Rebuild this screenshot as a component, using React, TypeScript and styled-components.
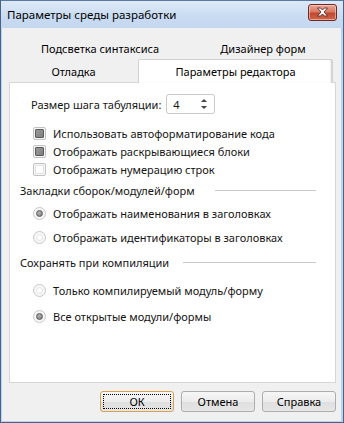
import styled, { createGlobalStyle } from "styled-components";

const GlobalStyle = createGlobalStyle`
  html, body {
    margin: 0;
    padding: 0;
    overflow: hidden;
    background: #ffffff;
  }
  body {
    font-family: "Noto Sans", "Open Sans", sans-serif;
    font-size: 11px;
    color: #141414;
  }
`;

const Window = styled.div`
  width: 344px;
  height: 423px;
  box-sizing: border-box;
  display: flex;
  flex-direction: column;
  background: #bcd2ee;
  border: 1px solid #44648c;
  border-top-color: #5a7aa4;
`;

const TitleBar = styled.div`
  height: 27px;
  flex-shrink: 0;
  display: flex;
  align-items: center;
  justify-content: space-between;
  padding: 0 6px 0 6px;
  background: linear-gradient(#dde9f7, #c9dbf1 60%, #c4d7f0);
`;

const Title = styled.div`
  font-size: 11.5px;
  color: #000;
  padding-bottom: 1px;
`;

const CloseButton = styled.div`
  width: 27px;
  height: 15px;
  margin-top: -5px;
  border: 1px solid #6e2a22;
  border-radius: 3px;
  background: linear-gradient(#e9a99a, #d77a63 45%, #c1472f 55%, #d0664a);
  display: flex;
  align-items: center;
  justify-content: center;
  box-shadow: inset 0 0 0 1px rgba(255, 220, 210, 0.55);
`;

const Client = styled.div`
  flex: 1;
  display: flex;
  flex-direction: column;
  background: #f0f0f0;
  margin: 0 2px 1px 1px;
  padding: 8px 5px 0 7px;
`;

const TabRow = styled.div`
  display: flex;
  height: 23px;
  align-items: flex-end;
`;

const Tab = styled.div<{ $width: number; $active?: boolean }>`
  width: ${(p) => p.$width}px;
  height: ${(p) => (p.$active ? 24 : 22)}px;
  box-sizing: border-box;
  display: flex;
  align-items: center;
  justify-content: center;
  position: relative;
  z-index: ${(p) => (p.$active ? 2 : 0)};
  margin-bottom: ${(p) => (p.$active ? -1 : 0)}px;
  background: ${(p) => (p.$active ? "#ffffff" : "transparent")};
  border: 1px solid ${(p) => (p.$active ? "#d2d2d2" : "transparent")};
  border-bottom: none;
  border-radius: 2px 2px 0 0;
  box-shadow: ${(p) => (p.$active ? "inset -2px 0 2px -1px #c8c8c8" : "none")};
  color: #000;
`;

const Panel = styled.div`
  height: 301px;
  box-sizing: border-box;
  background: #ffffff;
  border: 1px solid #d6d6d6;
  padding: 11px 0 0 0;
  display: flex;
  flex-direction: column;
`;

const SpinRow = styled.div`
  display: flex;
  align-items: center;
  height: 20px;
  padding-left: 21px;
  gap: 5px;
`;

const SpinBox = styled.div`
  width: 49px;
  height: 20px;
  box-sizing: border-box;
  border: 1px solid #c9c9c9;
  border-radius: 3px;
  display: flex;
  align-items: center;
  justify-content: space-between;
  padding: 0 7px 0 6px;
`;

const Arrows = styled.div`
  display: flex;
  flex-direction: column;
  gap: 4px;
`;

const Arrow = styled.div<{ $down?: boolean }>`
  width: 0;
  height: 0;
  border-left: 3px solid transparent;
  border-right: 3px solid transparent;
  ${(p) =>
    p.$down ? "border-top: 3px solid #444;" : "border-bottom: 3px solid #444;"}
`;

const OptionRow = styled.div<{ $top: number }>`
  display: flex;
  align-items: center;
  height: 18px;
  margin-top: ${(p) => p.$top}px;
  padding-left: 23px;
  gap: 7px;
`;

const CheckBox = styled.div<{ $checked?: boolean }>`
  width: 13px;
  height: 13px;
  box-sizing: border-box;
  border: 1px solid #c2c2c2;
  border-radius: 2px;
  background: #f6f6f6;
  display: flex;
  align-items: center;
  justify-content: center;
  &::after {
    content: "";
    width: 9px;
    height: 9px;
    box-sizing: border-box;
    border-radius: 1px;
    border: 1px solid ${(p) => (p.$checked ? "#5a5a5a" : "#e2e2e2")};
    background: ${(p) =>
      p.$checked ? "linear-gradient(135deg, #9a9a9a, #7e7e7e)" : "#ffffff"};
  }
`;

const Radio = styled.div<{ $checked?: boolean }>`
  width: 13px;
  height: 13px;
  box-sizing: border-box;
  border: 1px solid #c8c8c8;
  border-radius: 50%;
  background: #f7f7f7;
  display: flex;
  align-items: center;
  justify-content: center;
  &::after {
    content: "";
    width: 7px;
    height: 7px;
    box-sizing: border-box;
    border-radius: 50%;
    border: 1px solid ${(p) => (p.$checked ? "#5c5c5c" : "#e4e4e4")};
    background: ${(p) =>
      p.$checked ? "radial-gradient(circle at 40% 35%, #b4b4b4, #777)" : "#fff"};
  }
`;

const GroupHeader = styled.div<{ $top: number; $gap: number }>`
  display: flex;
  align-items: center;
  height: 18px;
  margin-top: ${(p) => p.$top}px;
  padding: 0 19px 0 10px;
  &::after {
    content: "";
    flex: 1;
    height: 1px;
    margin-left: ${(p) => p.$gap}px;
    background: #c8c8c8;
  }
`;

const ButtonRow = styled.div`
  display: flex;
  justify-content: flex-end;
  gap: 7px;
  margin-top: 8px;
`;

const Button = styled.div<{ $default?: boolean }>`
  width: 74px;
  height: 21px;
  box-sizing: border-box;
  border: 1px solid ${(p) => (p.$default ? "#d7a24e" : "#adadad")};
  border-radius: 3px;
  background: linear-gradient(#f6f6f6, #ececec 50%, #dfdfdf 51%, #e6e6e6);
  display: flex;
  align-items: center;
  justify-content: center;
  position: relative;
  color: #000;
  ${(p) =>
    p.$default
      ? `&::before {
    content: "";
    position: absolute;
    inset: 2px;
    border: 1px dotted #000;
  }`
      : ""}
`;

const App = () => {
  return (
    <>
      <GlobalStyle />
      <Window>
        <TitleBar>
          <Title>Параметры среды разработки</Title>
          <CloseButton>
            <svg width="13" height="10" viewBox="0 0 13 10">
              <path
                d="M1.5 1 L4.5 1 L6.5 3 L8.5 1 L11.5 1 L8 5 L11.5 9 L8.5 9 L6.5 7 L4.5 9 L1.5 9 L5 5 Z"
                fill="#ffffff"
                stroke="#5b2a22"
                strokeWidth="0.9"
                strokeLinejoin="round"
              />
            </svg>
          </CloseButton>
        </TitleBar>
        <Client>
          <TabRow>
            <Tab $width={182}>Подсветка синтаксиса</Tab>
            <Tab $width={144}>Дизайнер форм</Tab>
          </TabRow>
          <TabRow>
            <Tab $width={129}>Отладка</Tab>
            <Tab $width={195} $active>
              Параметры редактора
            </Tab>
          </TabRow>
          <Panel>
            <SpinRow>
              <span>Размер шага табуляции:</span>
              <SpinBox>
                <span>4</span>
                <Arrows>
                  <Arrow />
                  <Arrow $down />
                </Arrows>
              </SpinBox>
            </SpinRow>
            <OptionRow $top={10}>
              <CheckBox $checked />
              <span>Использовать автоформатирование кода</span>
            </OptionRow>
            <OptionRow $top={0}>
              <CheckBox $checked />
              <span>Отображать раскрывающиеся блоки</span>
            </OptionRow>
            <OptionRow $top={0}>
              <CheckBox />
              <span>Отображать нумерацию строк</span>
            </OptionRow>
            <GroupHeader $top={3} $gap={20}>
              Закладки сборок/модулей/форм
            </GroupHeader>
            <OptionRow $top={5}>
              <Radio $checked />
              <span>Отображать наименования в заголовках</span>
            </OptionRow>
            <OptionRow $top={6}>
              <Radio />
              <span>Отображать идентификаторы в заголовках</span>
            </OptionRow>
            <GroupHeader $top={7} $gap={14}>
              Сохранять при компиляции
            </GroupHeader>
            <OptionRow $top={10}>
              <Radio />
              <span>Только компилируемый модуль/форму</span>
            </OptionRow>
            <OptionRow $top={8}>
              <Radio $checked />
              <span>Все открытые модули/формы</span>
            </OptionRow>
          </Panel>
          <ButtonRow>
            <Button $default>ОК</Button>
            <Button>Отмена</Button>
            <Button>Справка</Button>
          </ButtonRow>
        </Client>
      </Window>
    </>
  );
};

export default App;
